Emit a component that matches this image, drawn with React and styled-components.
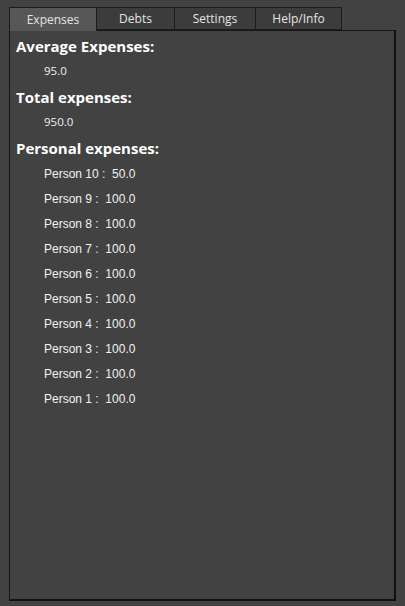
import React, { useState } from "react";
import styled, { createGlobalStyle } from "styled-components";

const GlobalStyle = createGlobalStyle`
  html, body {
    margin: 0;
    padding: 0;
    background: #424242;
  }
  body {
    font-family: "Open Sans", "Liberation Sans", sans-serif;
  }
`;

const Window = styled.div`
  width: 405px;
  height: 606px;
  box-sizing: border-box;
  padding: 7px 9px 5px 9px;
  display: flex;
  flex-direction: column;
  background: #424242;
`;

const TabBar = styled.div`
  display: flex;
  height: 23px;
  position: relative;
  z-index: 1;
`;

const Tab = styled.div`
  width: ${(p) => p.w}px;
  box-sizing: border-box;
  display: flex;
  align-items: center;
  justify-content: center;
  border: 1px solid #1c1c1c;
  border-left: ${(p) => (p.first ? "1px solid #1c1c1c" : "none")};
  border-bottom: ${(p) => (p.active ? "none" : "1px solid #1c1c1c")};
  height: ${(p) => (p.active ? "24px" : "23px")};
  background: ${(p) => (p.active ? "#575757" : "#3c3c3c")};
  color: #e4e4e4;
  font-size: 12px;
  cursor: default;
`;

const Panel = styled.div`
  flex: 1;
  box-sizing: border-box;
  border: 1px solid #161616;
  border-bottom: 2px solid #111;
  border-right: 2px solid #111;
  background: #424242;
  padding: 5px 0 0 6px;
  display: flex;
  flex-direction: column;
`;

const Heading = styled.div`
  color: #ffffff;
  font-weight: 700;
  font-size: 15px;
  line-height: 20px;
  margin-top: ${(p) => p.top || 0}px;
`;

const Value = styled.div`
  color: #f0f0f0;
  font-size: 11.5px;
  line-height: 16px;
  padding-left: 28px;
  margin-top: 7px;
`;

const PersonList = styled.div`
  display: flex;
  flex-direction: column;
  padding-left: 28px;
  margin-top: 4px;
`;

const PersonRow = styled.div`
  font-family: "Liberation Sans", Arial, sans-serif;
  color: #f2f2f2;
  font-size: 12px;
  line-height: 25px;
  white-space: pre;
`;

const tabs = [
  { label: "Expenses", w: 88 },
  { label: "Debts", w: 78 },
  { label: "Settings", w: 81 },
  { label: "Help/Info", w: 86 },
];

const people = [
  ["Person 10", "50.0"],
  ["Person 9", "100.0"],
  ["Person 8", "100.0"],
  ["Person 7", "100.0"],
  ["Person 6", "100.0"],
  ["Person 5", "100.0"],
  ["Person 4", "100.0"],
  ["Person 3", "100.0"],
  ["Person 2", "100.0"],
  ["Person 1", "100.0"],
];

export default function App() {
  const [active, setActive] = useState(0);

  return (
    <Window>
      <GlobalStyle />
      <TabBar>
        {tabs.map((t, i) => (
          <Tab
            key={t.label}
            w={t.w}
            first={i === 0}
            active={active === i}
            onClick={() => setActive(i)}
          >
            {t.label}
          </Tab>
        ))}
      </TabBar>
      <Panel>
        <Heading>Average Expenses:</Heading>
        <Value>95.0</Value>
        <Heading top={8}>Total expenses:</Heading>
        <Value>950.0</Value>
        <Heading top={8}>Personal expenses:</Heading>
        <PersonList>
          {people.map(([name, amount]) => (
            <PersonRow key={name}>{`${name} :  ${amount}`}</PersonRow>
          ))}
        </PersonList>
      </Panel>
    </Window>
  );
}
